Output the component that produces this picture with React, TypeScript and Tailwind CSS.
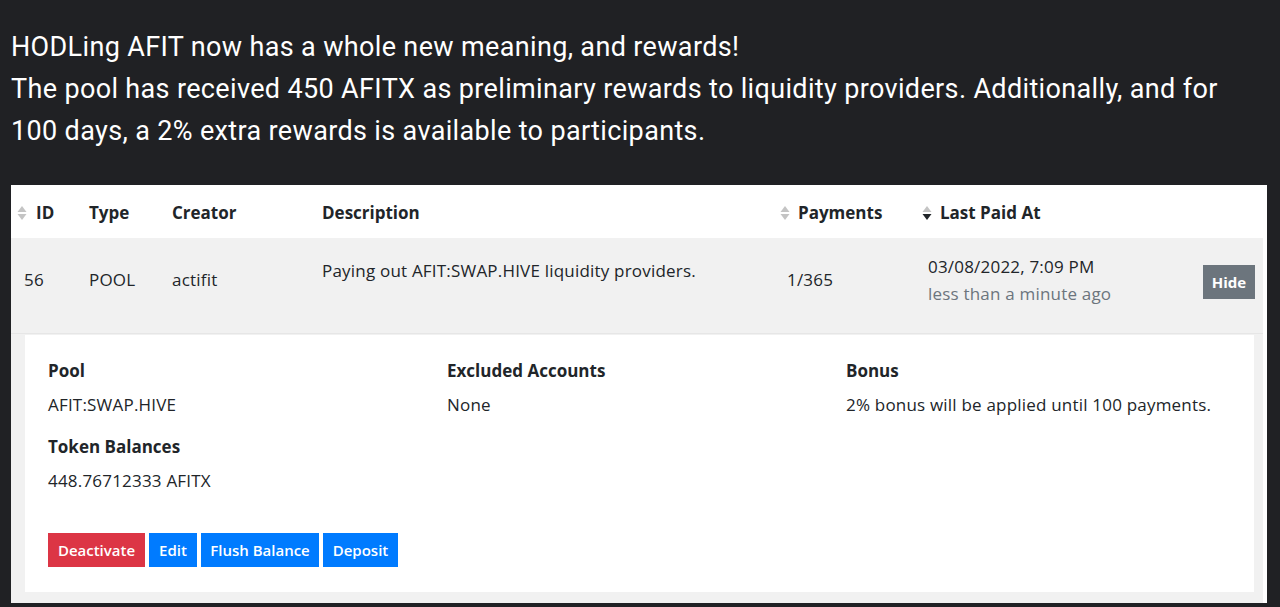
import React from "react";

function SortIcon({ active = false }: { active?: boolean }) {
  return (
    <svg width="10" height="16" viewBox="0 0 10 16" className="shrink-0">
      <path d="M5 1 L9.5 7 L0.5 7 Z" fill="#c4c4c4" />
      <path d="M0.5 9 L9.5 9 L5 15 Z" fill={active ? "#212529" : "#c4c4c4"} />
    </svg>
  );
}

export default function App() {
  const tableFont = { fontFamily: '"Open Sans", "Noto Sans", sans-serif' };
  return (
    <div className="min-h-screen w-full bg-[#202124] px-[11px] pt-[26px]">
      <p
        className="text-white text-[27px] leading-[42px] tracking-[0.35px]"
        style={{ fontFamily: 'Roboto, "Liberation Sans", sans-serif' }}
      >
        HODLing AFIT now has a whole new meaning, and rewards!
        <br />
        The pool has received 450 AFITX as preliminary rewards to liquidity providers. Additionally, and for
        <br />
        100 days, a 2% extra rewards is available to participants.
      </p>

      <div className="mt-[33px] w-[1256px] bg-white text-[#212529] text-[17px] tracking-[0.2px]" style={tableFont}>
        {/* header */}
        <div className="flex h-[53px] items-center pt-[3px] font-bold tracking-normal">
          <div className="flex w-[66px] items-center gap-[9px] pl-[6px]">
            <SortIcon />
            <span>ID</span>
          </div>
          <div className="w-[83px] pl-[12px]">Type</div>
          <div className="w-[150px] pl-[12px]">Creator</div>
          <div className="w-[458px] pl-[12px]">Description</div>
          <div className="flex w-[142px] items-center gap-[8px] pl-[12px]">
            <SortIcon />
            <span>Payments</span>
          </div>
          <div className="flex items-center gap-[8px] pl-[12px]">
            <SortIcon active />
            <span>Last Paid At</span>
          </div>
        </div>

        <div className="mr-[4px] bg-[#f1f1f1]">
          {/* row */}
          <div className="flex h-[96px] items-start border-b border-[#e6e6e6]">
            <div className="w-[66px] pl-[13px] pt-[30px] leading-[24px]">56</div>
            <div className="w-[83px] pl-[12px] pt-[30px] leading-[24px]">POOL</div>
            <div className="w-[150px] pl-[12px] pt-[30px] leading-[24px]">actifit</div>
            <div className="w-[458px] pl-[12px] pt-[21px] leading-[24px]">
              Paying out AFIT:SWAP.HIVE liquidity providers.
            </div>
            <div className="w-[142px] pl-[19px] pt-[30px] leading-[24px]">1/365</div>
            <div className="w-[293px] pl-[18px] pt-[17px]">
              <div className="leading-[24px]">03/08/2022, 7:09 PM</div>
              <div className="leading-[30px] text-[#6c757d]">less than a minute ago</div>
            </div>
            <div className="pt-[27px]">
              <button className="h-[34px] w-[52px] bg-[#6c757d] text-[15px] font-bold tracking-normal text-white">
                Hide
              </button>
            </div>
          </div>

          {/* details */}
          <div className="pl-[14px] pr-[9px] pt-[1px] pb-[11px]">
            <div className="h-[257px] bg-white pl-[23px] pt-[24px]">
              <div className="flex">
                <div className="w-[399px]">
                  <div className="font-bold leading-[24px] tracking-normal">Pool</div>
                  <div className="mt-[10px] leading-[24px]">AFIT:SWAP.HIVE</div>
                  <div className="mt-[18px] font-bold leading-[24px] tracking-normal">Token Balances</div>
                  <div className="mt-[10px] leading-[24px]">448.76712333 AFITX</div>
                </div>
                <div className="w-[399px]">
                  <div className="font-bold leading-[24px] tracking-normal">Excluded Accounts</div>
                  <div className="mt-[10px] leading-[24px]">None</div>
                </div>
                <div>
                  <div className="font-bold leading-[24px] tracking-normal">Bonus</div>
                  <div className="mt-[10px] leading-[24px]">2% bonus will be applied until 100 payments.</div>
                </div>
              </div>
              <div className="mt-[40px] flex gap-[4px] text-[15px] font-semibold tracking-normal text-white">
                <button className="h-[34px] w-[97px] bg-[#dc3545]">Deactivate</button>
                <button className="h-[34px] w-[48px] bg-[#007bff]">Edit</button>
                <button className="h-[34px] w-[118px] bg-[#007bff]">Flush Balance</button>
                <button className="h-[34px] w-[75px] bg-[#007bff]">Deposit</button>
              </div>
            </div>
          </div>
        </div>
      </div>
    </div>
  );
}
